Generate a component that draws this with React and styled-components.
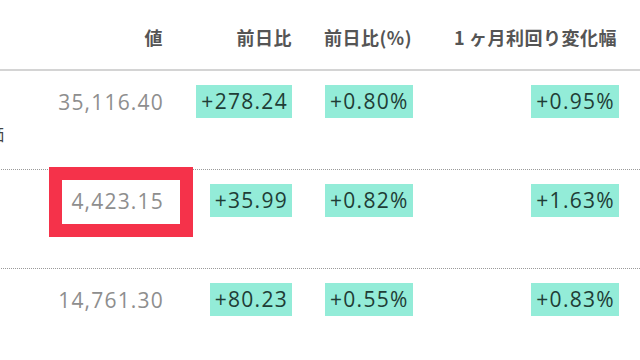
import React from "react";
import styled, { createGlobalStyle } from "styled-components";

const rows = [
  { name: "平均株価", value: "35,116.40", change: "+278.24", pct: "+0.80%", month: "+0.95%" },
  { name: "", value: "4,423.15", change: "+35.99", pct: "+0.82%", month: "+1.63%", marked: true },
  { name: "", value: "14,761.30", change: "+80.23", pct: "+0.55%", month: "+0.83%" },
];

export default function App() {
  return (
    <>
      <GlobalStyle />
      <Table>
        <HeaderRow>
          <Cell />
          <HeadCell $align="right" $pad="0 7px 0 0">値</HeadCell>
          <HeadCell $align="right" $pad="0 6px 0 0">前日比</HeadCell>
          <HeadCell $align="left" $pad="0 0 0 26px">前日比(%)</HeadCell>
          <HeadCell $align="right" $pad="0 23px 0 0">
            <One>1</One>ヶ月利回り変化幅
          </HeadCell>
        </HeaderRow>
        {rows.map((r, i) => (
          <Row key={i} $last={i === rows.length - 1}>
            <NameCell>{r.name}</NameCell>
            <Cell $align="right" $pad="0 7px 0 0">
              <Value>
                {r.value}
                {r.marked && <Marker />}
              </Value>
            </Cell>
            <Cell $align="right" $pad="0 6px 0 0">
              <Badge>{r.change}</Badge>
            </Cell>
            <Cell $align="left" $pad="0 0 0 27px">
              <Badge>{r.pct}</Badge>
            </Cell>
            <Cell $align="right" $pad="0 21px 0 0">
              <Badge>{r.month}</Badge>
            </Cell>
          </Row>
        ))}
      </Table>
    </>
  );
}

const GlobalStyle = createGlobalStyle`
  html, body {
    margin: 0;
    padding: 0;
    background: #fff;
    overflow: hidden;
  }
  body {
    font-family: "Noto Sans CJK JP", "Noto Sans", sans-serif;
    width: 640px;
    height: 360px;
  }
`;

const Table = styled.div`
  margin-left: -60px;
  width: 700px;
`;

const HeaderRow = styled.div`
  display: grid;
  grid-template-columns: 60px 170px 128px 120px 1fr;
  height: 71px;
  padding-top: 5px;
  box-sizing: border-box;
  align-items: center;
  border-bottom: 2px solid #d4d4d4;
`;

const Row = styled.div`
  display: grid;
  grid-template-columns: 60px 170px 128px 120px 1fr;
  height: ${(p) => (p.$last ? "91px" : "99px")};
  box-sizing: border-box;
  padding-top: 14px;
  align-items: start;
  border-bottom: ${(p) => (p.$last ? "none" : "1px dotted #9a9a9a")};
`;

const Cell = styled.div`
  text-align: ${(p) => p.$align || "left"};
  padding: ${(p) => p.$pad || "0"};
`;

const HeadCell = styled(Cell)`
  font-size: 18px;
  font-weight: 600;
  color: #555;
  letter-spacing: 0.5px;
  white-space: nowrap;
`;

const One = styled.span`
  margin-right: 4px;
`;

const NameCell = styled.div`
  font-size: 17px;
  line-height: 34px;
  padding-top: 32px;
  margin-left: -4px;
  color: #444;
  white-space: nowrap;
`;

const Value = styled.span`
  position: relative;
  display: inline-block;
  font-family: "Open Sans", "Noto Sans", sans-serif;
  font-size: 21px;
  line-height: 34px;
  color: #8e8e8e;
  letter-spacing: 1.2px;
  margin-right: -1px;
`;

const Marker = styled.span`
  position: absolute;
  left: -22px;
  right: -29px;
  top: -17px;
  bottom: -19px;
  border: 13px solid #f5324a;
`;

const Badge = styled.span`
  display: inline-block;
  background: #93ecd8;
  color: #1f3d36;
  font-family: "Open Sans", "Noto Sans", sans-serif;
  font-size: 21px;
  line-height: 33px;
  padding: 0 4px 0 5px;
  letter-spacing: 1.3px;
`;
